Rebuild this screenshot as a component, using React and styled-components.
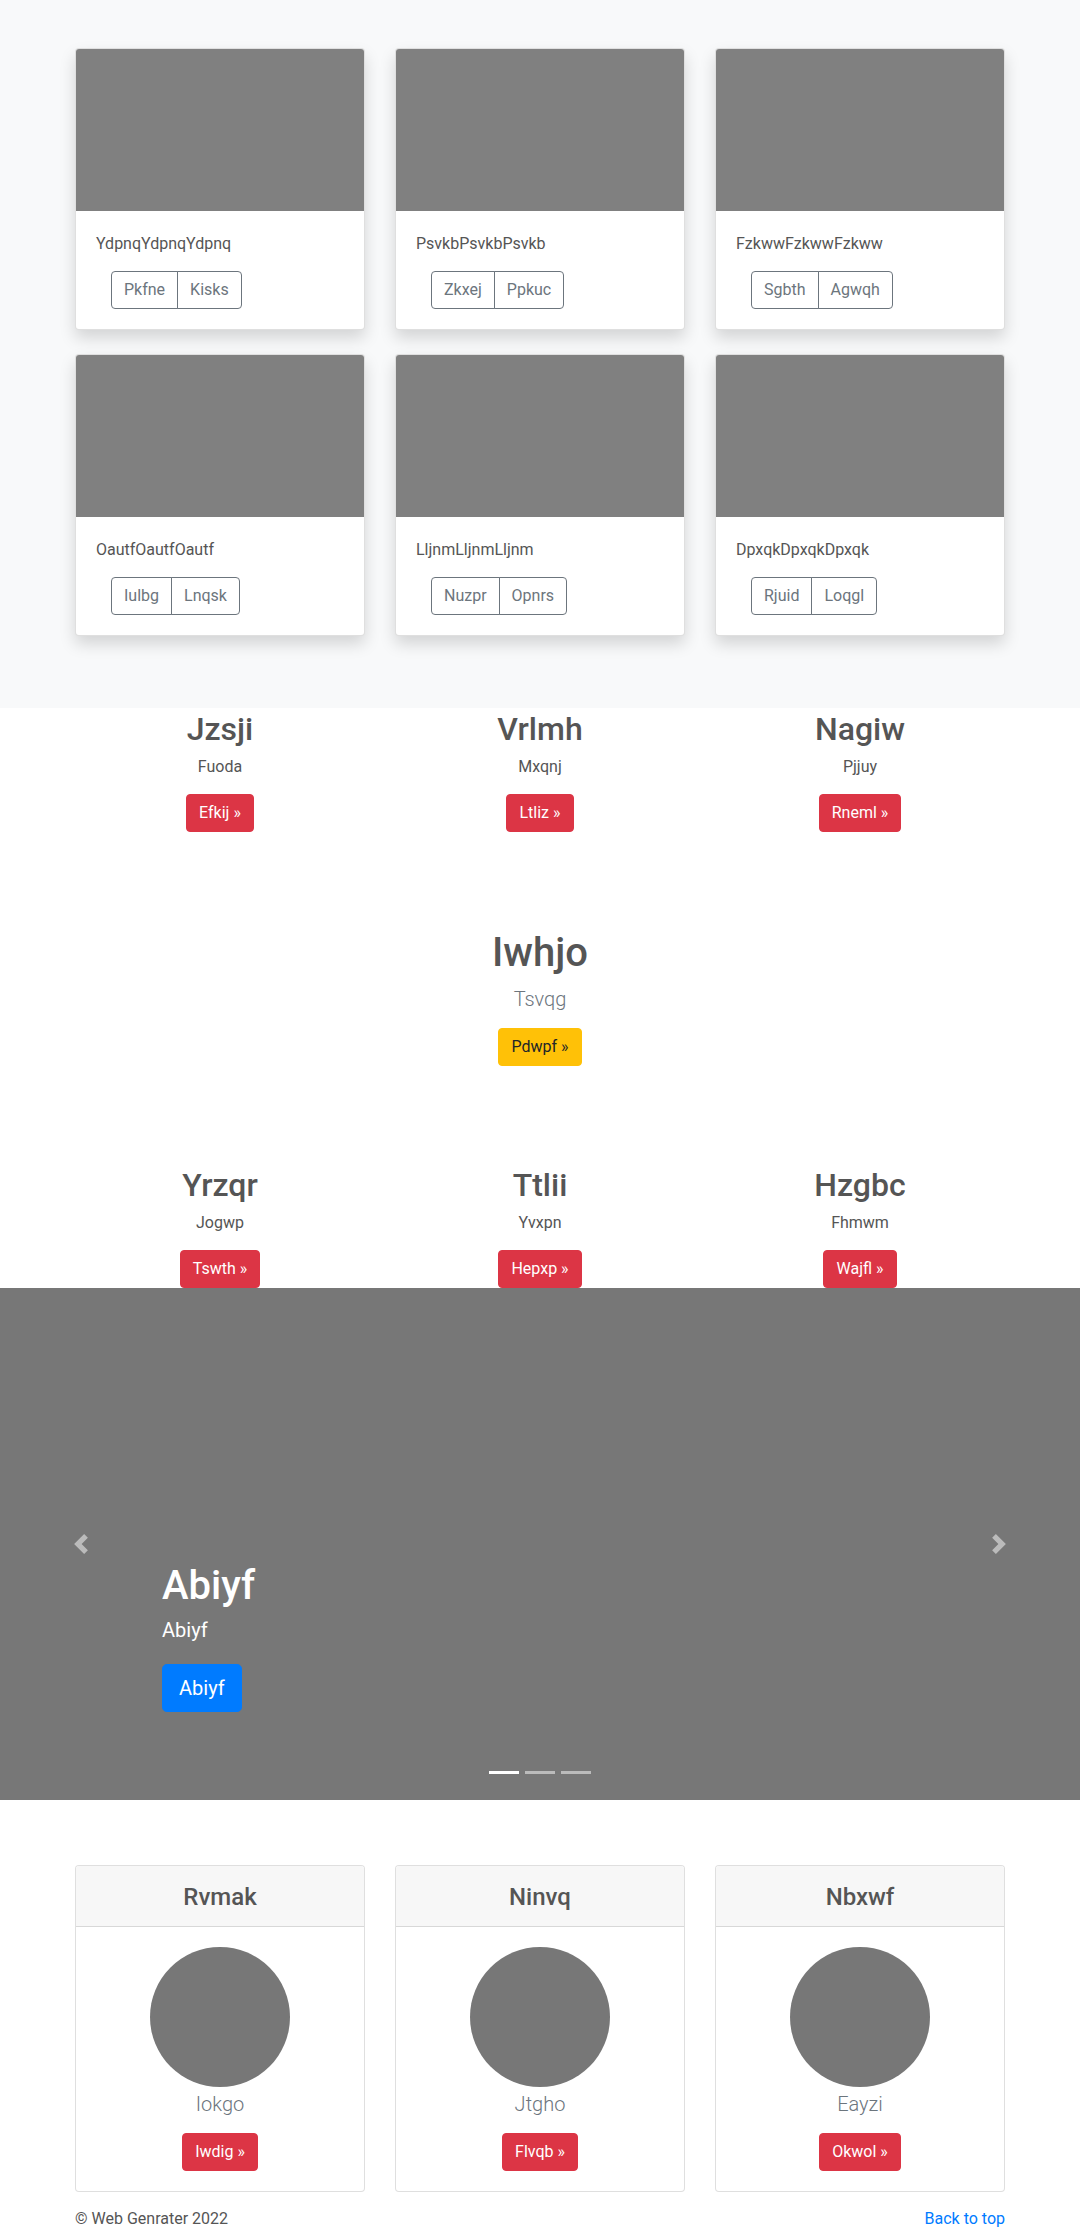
import React from "react";
import styled, { createGlobalStyle, css } from "styled-components";

const GlobalStyle = createGlobalStyle`
	body {
		margin: 0;
		font-family: "Segoe UI", Roboto, "Helvetica Neue", Arial, "Noto Sans", sans-serif;
		font-size: 16px;
		line-height: 1.5;
		color: #555555;
		background: #ffffff;
	}
	* { box-sizing: border-box; }
`;

const baselineFix = (gap) => css`
	padding-top: 0.07em;
	margin-bottom: calc(${gap}px - 0.07em);
`;

const Container = styled.div`
	width: 960px;
	margin: 0 auto;
	padding: 0 15px;
`;

const ThreeCols = styled.div`
	display: grid;
	grid-template-columns: repeat(3, 1fr);
	column-gap: 30px;
	row-gap: ${(p) => p.rowGap || 0}px;
`;

/* album */

const AlbumSection = styled.section`
	background-color: #f8f9fa;
	padding: 48px 0 72px;
`;

const AlbumCard = styled.div`
	background: #ffffff;
	border: 1px solid rgba(0, 0, 0, 0.125);
	border-radius: 4px;
	box-shadow: 0 8px 16px rgba(0, 0, 0, 0.15);
	overflow: hidden;
`;

const Thumb = styled.div`
	height: 162px;
	background-color: #808080;
`;

const CardBody = styled.div`
	padding: 20px;
	text-align: ${(p) => p.align || "left"};
`;

const CardText = styled.p`
	margin: 0;
	font-size: 16px;
	line-height: 24px;
	${baselineFix(16)}
`;

const BtnGroup = styled.div`
	display: inline-flex;
	margin-left: 15px;
`;

const OutlineBtn = styled.button`
	font-family: inherit;
	font-size: 16px;
	line-height: 24px;
	padding: 6px 12px;
	color: #6c757d;
	background: transparent;
	border: 1px solid #6c757d;
	border-radius: 0;
	&:first-child {
		border-radius: 4px 0 0 4px;
	}
	&:last-child {
		border-radius: 0 4px 4px 0;
		margin-left: -1px;
	}
`;

/* features */

const FeatureCol = styled.div`
	text-align: center;
`;

const Heading = styled.h2`
	margin: 0;
	font-size: ${(p) => p.size || 32}px;
	font-weight: 500;
	line-height: 1.2;
	color: ${(p) => p.color || "#555555"};
	${baselineFix(8)}
`;

const Text = styled.p`
	margin: 0;
	font-size: 16px;
	line-height: 24px;
	${baselineFix(16)}
`;

const Lead = styled.p`
	margin: 0;
	font-size: 20px;
	font-weight: 300;
	line-height: 30px;
	color: #6c757d;
	${baselineFix(16)}
`;

const Btn = styled.button`
	display: inline-block;
	font-family: inherit;
	font-size: 16px;
	line-height: 24px;
	padding: 6px 12px;
	border: 1px solid ${(p) => p.bg};
	border-radius: 4px;
	background-color: ${(p) => p.bg};
	color: ${(p) => p.fg || "#ffffff"};
`;

const Hero = styled.section`
	padding: 94px 0 97px;
	text-align: center;
`;

/* carousel */

const Carousel = styled.div`
	position: relative;
	height: 512px;
	background-color: #777777;
`;

const Caption = styled.div`
	position: absolute;
	left: 15%;
	right: 15%;
	bottom: 48px;
	padding: 20px 0;
	color: #ffffff;
	text-align: left;
`;

const CaptionText = styled.p`
	margin: 0 0 20px;
	font-size: 20px;
	line-height: 1.4;
`;

const LargeBtn = styled.button`
	font-family: inherit;
	font-size: 20px;
	line-height: 30px;
	padding: 8px 16px;
	border: 1px solid #007bff;
	border-radius: 4.8px;
	background-color: #007bff;
	color: #ffffff;
`;

const Control = styled.div`
	position: absolute;
	top: 0;
	bottom: 0;
	${(p) => (p.side === "left" ? "left: 0;" : "right: 0;")}
	width: 15%;
	display: flex;
	align-items: center;
	justify-content: center;
	opacity: 0.5;
`;

const Indicators = styled.ol`
	position: absolute;
	left: 0;
	right: 0;
	bottom: 0;
	margin: 0 0 16px;
	padding: 0;
	list-style: none;
	display: flex;
	justify-content: center;
`;

const Indicator = styled.li`
	width: 30px;
	height: 3px;
	margin: 0 3px;
	border-top: 10px solid transparent;
	border-bottom: 10px solid transparent;
	box-sizing: content-box;
	background-clip: padding-box;
	background-color: #ffffff;
	opacity: ${(p) => (p.active ? 1 : 0.5)};
`;

/* pricing cards */

const PricingSection = styled.section`
	padding-top: 65px;
`;

const PlainCard = styled.div`
	border: 1px solid rgba(0, 0, 0, 0.125);
	border-radius: 4px;
	overflow: hidden;
	background: #ffffff;
`;

const CardHeader = styled.div`
	padding: 16px 20px;
	background-color: #f7f7f7;
	border-bottom: 1px solid rgba(0, 0, 0, 0.125);
	text-align: center;
`;

const Title = styled.h4`
	margin: 0;
	font-size: 24px;
	font-weight: 500;
	line-height: 1.2;
	color: #555555;
	${baselineFix(0)}
`;

const Avatar = styled.div`
	width: 140px;
	height: 140px;
	margin: 0 auto;
	border-radius: 50%;
	background-color: #777777;
`;

const Footer = styled.footer`
	padding-top: 15px;
`;

const FooterRow = styled.div`
	display: flex;
	justify-content: space-between;
`;

const FooterText = styled.p`
	margin: 0 0 16px;
	font-size: 16px;
`;

const FooterLink = styled.a`
	color: #007bff;
	text-decoration: none;
`;

const albumCards = [
	["YdpnqYdpnqYdpnq", "Pkfne", "Kisks"],
	["PsvkbPsvkbPsvkb", "Zkxej", "Ppkuc"],
	["FzkwwFzkwwFzkww", "Sgbth", "Agwqh"],
	["OautfOautfOautf", "Iulbg", "Lnqsk"],
	["LljnmLljnmLljnm", "Nuzpr", "Opnrs"],
	["DpxqkDpxqkDpxqk", "Rjuid", "Loqgl"],
];

const featuresTop = [
	["Jzsji", "Fuoda", "Efkij"],
	["Vrlmh", "Mxqnj", "Ltliz"],
	["Nagiw", "Pjjuy", "Rneml"],
];

const featuresBottom = [
	["Yrzqr", "Jogwp", "Tswth"],
	["Ttlii", "Yvxpn", "Hepxp"],
	["Hzgbc", "Fhmwm", "Wajfl"],
];

const pricing = [
	["Rvmak", "Iokgo", "Iwdig"],
	["Ninvq", "Jtgho", "Flvqb"],
	["Nbxwf", "Eayzi", "Okwol"],
];

function Features({ items }) {
	return (
		<Container>
			<ThreeCols>
				{items.map(([h, t, b]) => (
					<FeatureCol key={h}>
						<Heading>{h}</Heading>
						<Text>{t}</Text>
						<Btn bg="#dc3545">{b} &raquo;</Btn>
					</FeatureCol>
				))}
			</ThreeCols>
		</Container>
	);
}

function Chevron({ dir }) {
	const d =
		dir === "left"
			? "M5.25 0l-4 4 4 4 1.5-1.5L4.25 4l2.5-2.5L5.25 0z"
			: "M2.75 0l-1.5 1.5L3.75 4l-2.5 2.5L2.75 8l4-4-4-4z";
	return (
		<svg width="20" height="20" viewBox="0 0 8 8" fill="#fff">
			<path d={d} />
		</svg>
	);
}

export default function App() {
	return (
		<>
			<GlobalStyle />
			<AlbumSection>
				<Container>
					<ThreeCols rowGap={24}>
						{albumCards.map(([text, a, b]) => (
							<AlbumCard key={text}>
								<Thumb />
								<CardBody>
									<CardText>{text}</CardText>
									<BtnGroup>
										<OutlineBtn>{a}</OutlineBtn>
										<OutlineBtn>{b}</OutlineBtn>
									</BtnGroup>
								</CardBody>
							</AlbumCard>
						))}
					</ThreeCols>
				</Container>
			</AlbumSection>

			<Features items={featuresTop} />

			<Hero>
				<Heading as="h1" size={40}>Iwhjo</Heading>
				<Lead>Tsvqg</Lead>
				<Btn bg="#ffc107" fg="#212529">Pdwpf &raquo;</Btn>
			</Hero>

			<Features items={featuresBottom} />

			<Carousel>
				<Control side="left"><Chevron dir="left" /></Control>
				<Control side="right"><Chevron dir="right" /></Control>
				<Caption>
					<Heading as="h1" size={40} color="#ffffff">Abiyf</Heading>
					<CaptionText>Abiyf</CaptionText>
					<CaptionText><LargeBtn>Abiyf</LargeBtn></CaptionText>
				</Caption>
				<Indicators>
					<Indicator active />
					<Indicator />
					<Indicator />
				</Indicators>
			</Carousel>

			<PricingSection>
				<Container>
					<ThreeCols>
						{pricing.map(([title, name, btn]) => (
							<PlainCard key={title}>
								<CardHeader>
									<Title>{title}</Title>
								</CardHeader>
								<CardBody align="center">
									<Avatar />
									<Lead>{name}</Lead>
									<Btn bg="#dc3545">{btn} &raquo;</Btn>
								</CardBody>
							</PlainCard>
						))}
					</ThreeCols>
				</Container>
			</PricingSection>

			<Footer>
				<Container>
					<FooterRow>
						<FooterText>&copy; Web Genrater 2022</FooterText>
						<FooterText><FooterLink href="#">Back to top</FooterLink></FooterText>
					</FooterRow>
				</Container>
			</Footer>
		</>
	);
}
